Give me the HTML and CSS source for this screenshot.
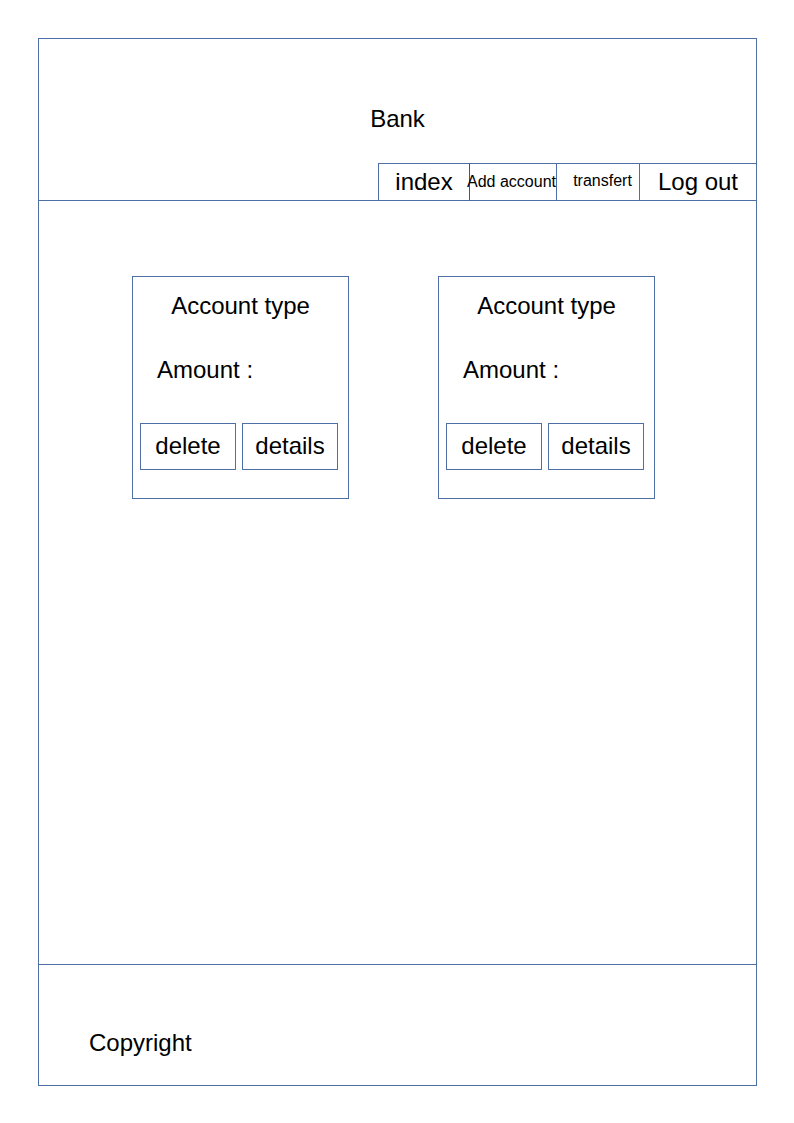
FILE: index.html
```html
<!DOCTYPE html>
<html lang="en">
<head>
<meta charset="utf-8">
<title>Bank</title>
<link rel="stylesheet" href="styles.css">
</head>
<body>
<div class="frame">
  <header class="header">
    <div class="title">Bank</div>
    <nav class="nav">
      <a class="nav-item nav-index">index</a>
      <a class="nav-item nav-add small">Add account</a>
      <a class="nav-item nav-transfer small">transfert</a>
      <a class="nav-item nav-logout">Log out</a>
    </nav>
  </header>
  <main class="main">
    <div class="card">
      <div class="card-title">Account type</div>
      <div class="card-amount">Amount :</div>
      <div class="card-actions">
        <button class="btn">delete</button>
        <button class="btn">details</button>
      </div>
    </div>
    <div class="card">
      <div class="card-title">Account type</div>
      <div class="card-amount">Amount :</div>
      <div class="card-actions">
        <button class="btn">delete</button>
        <button class="btn">details</button>
      </div>
    </div>
  </main>
  <footer class="footer">
    <div class="copyright">Copyright</div>
  </footer>
</div>
</body>
</html>
```
FILE: styles.css
```css
* { box-sizing: border-box; }
html, body { margin: 0; padding: 0; background: #fff; }
body {
  font-family: "Liberation Sans", Arial, sans-serif;
  color: #000;
}
.frame {
  margin: 38px 0 0 38px;
  width: 719px;
  height: 1048px;
  border: 1px solid #4d6fa6;
  display: flex;
  flex-direction: column;
}
.header {
  height: 162px;
  border-bottom: 1px solid #4d6fa6;
  display: flex;
  flex-direction: column;
}
.title {
  padding-top: 66px;
  font-size: 24px;
  line-height: 28px;
  text-align: center;
}
.nav {
  margin-top: auto;
  margin-bottom: -1px;
  margin-right: -1px;
  display: flex;
  justify-content: flex-end;
}
.nav-item {
  height: 38px;
  border: 1px solid #4d6fa6;
  margin-left: -1px;
  display: flex;
  align-items: center;
  justify-content: center;
  font-size: 24px;
  white-space: nowrap;
  color: #000;
}
.nav-item.small { font-size: 16px; }
.nav-index { width: 92px; }
.nav-add { width: 88px; border-left-color: #2f5a99; padding-right: 3px; }
.nav-transfer { width: 84px; padding-left: 9px; padding-bottom: 3px; }
.nav-logout { width: 118px; }
.main {
  flex: 1;
  display: flex;
  align-items: flex-start;
  gap: 89px;
  padding: 75px 0 0 93px;
}
.card {
  width: 217px;
  height: 223px;
  border: 1px solid #4d6fa6;
  padding: 15px 10px 0 7px;
}
.card-title {
  font-size: 24px;
  line-height: 28px;
  text-align: center;
  padding-left: 3px;
}
.card-amount {
  margin-top: 36px;
  padding-left: 17px;
  font-size: 24px;
  line-height: 28px;
}
.card-actions {
  margin-top: 39px;
  display: flex;
  gap: 6px;
}
.btn {
  width: 96px;
  height: 47px;
  border: 1px solid #4d6fa6;
  background: #fff;
  font-family: "Liberation Sans", Arial, sans-serif;
  font-size: 24px;
  color: #000;
  padding: 0 0 2px 0;
  border-radius: 0;
}
.footer {
  height: 121px;
  border-top: 1px solid #4d6fa6;
  padding: 64px 0 0 50px;
}
.copyright {
  font-size: 24px;
  line-height: 28px;
}
```
